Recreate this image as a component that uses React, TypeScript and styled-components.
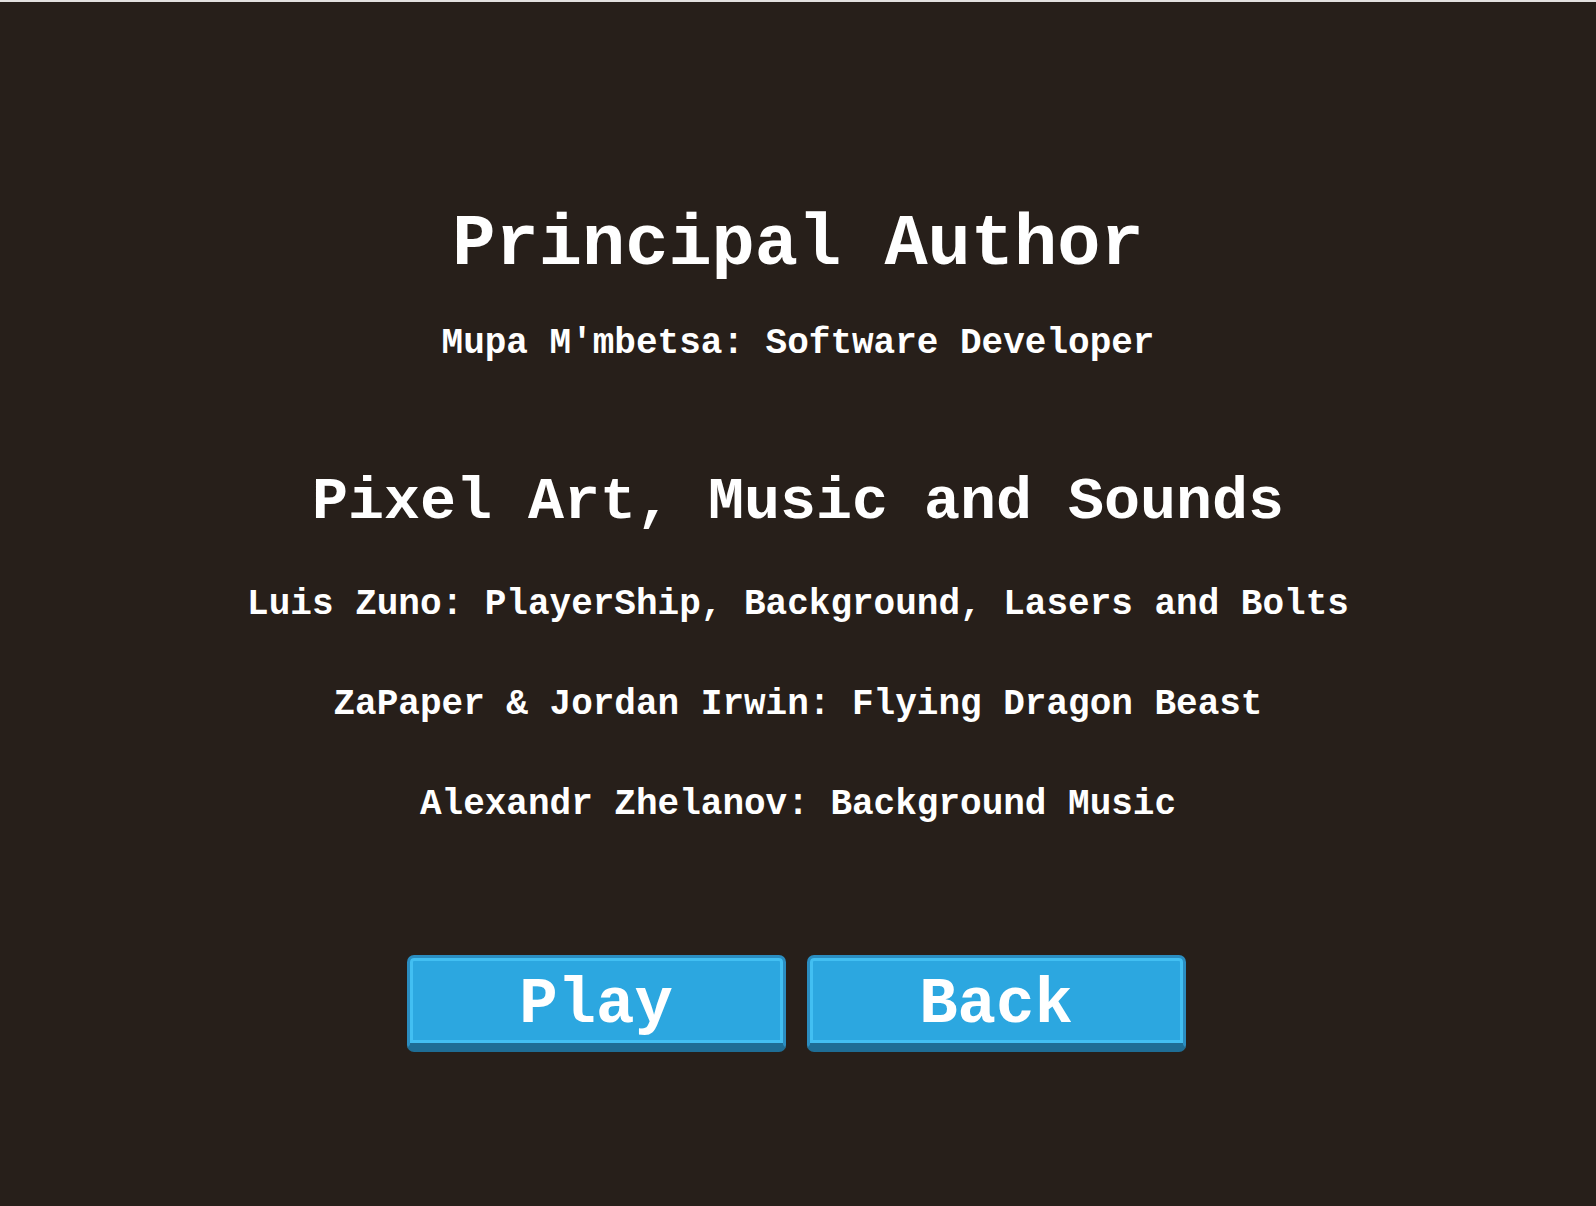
import React from "react";
import styled, { createGlobalStyle } from "styled-components";

const GlobalStyle = createGlobalStyle`
  html, body {
    margin: 0;
    padding: 0;
    background: #e2e0df;
  }
  body {
    font-family: "Liberation Mono", "Courier New", monospace;
  }
`;

const Screen = styled.main`
  margin-top: 2px;
  min-height: 1204px;
  box-sizing: border-box;
  background: #271f1a;
  color: #ffffff;
  display: flex;
  flex-direction: column;
  align-items: center;
  padding-top: 207px;
  font-family: "Liberation Mono", "Courier New", monospace;
  font-weight: 700;
`;

const Heading = styled.h1<{ $size: number; $gap: number }>`
  margin: ${(p) => p.$gap}px 0 0;
  font-size: ${(p) => p.$size}px;
  line-height: ${(p) => p.$size}px;
  font-weight: 700;
  white-space: pre;
`;

const Credit = styled.p<{ $gap: number }>`
  margin: ${(p) => p.$gap}px 0 0;
  font-size: 36px;
  line-height: 36px;
  white-space: pre;
`;

const ButtonRow = styled.div`
  display: flex;
  gap: 21px;
  margin-top: 132px;
  margin-right: 4px;
`;

const MenuButton = styled.button`
  box-sizing: border-box;
  width: 379px;
  height: 97px;
  padding: 9px 0 0;
  background: #2ca7e0;
  border: 3px solid #2a8dc1;
  border-bottom: 9px solid #1e6d95;
  border-radius: 7px;
  box-shadow: inset 0 0 0 3px #42bff2;
  color: #ffffff;
  font-family: "Liberation Mono", "Courier New", monospace;
  font-weight: 700;
  font-size: 64px;
  line-height: 76px;
  cursor: pointer;
`;

export default function App() {
  return (
    <>
      <GlobalStyle />
      <Screen>
        <Heading $size={72} $gap={0}>Principal Author</Heading>
        <Credit $gap={45}>Mupa M'mbetsa: Software Developer</Credit>
        <Heading $size={60} $gap={110}>Pixel Art, Music and Sounds</Heading>
        <Credit $gap={55}>Luis Zuno: PlayerShip, Background, Lasers and Bolts</Credit>
        <Credit $gap={64}>ZaPaper &amp; Jordan Irwin: Flying Dragon Beast</Credit>
        <Credit $gap={64}>Alexandr Zhelanov: Background Music</Credit>
        <ButtonRow>
          <MenuButton>Play</MenuButton>
          <MenuButton>Back</MenuButton>
        </ButtonRow>
      </Screen>
    </>
  );
}
